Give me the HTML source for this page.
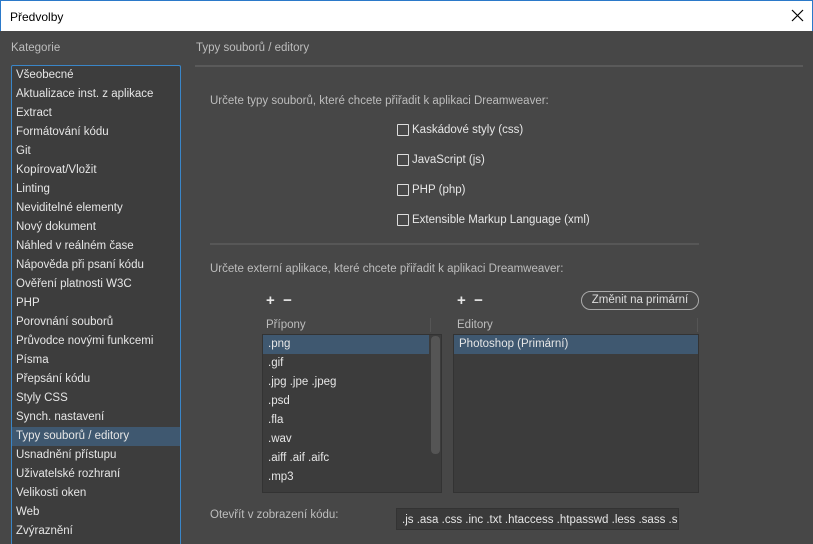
<!DOCTYPE html>
<html><head><meta charset="utf-8"><style>
*{margin:0;padding:0;box-sizing:border-box}
html,body{width:813px;height:544px;overflow:hidden}
body{background:#474747;font-family:"Liberation Sans",sans-serif;font-size:11.5px;color:#e6e6e6;position:relative}
.a{position:absolute;white-space:nowrap}
.title{left:0;top:0;width:813px;height:31px;background:#fff;color:#000;font-size:12px;border:1px solid #2b79c9;border-bottom:none}
.lab{color:#bdbdbd}
.cat{left:11px;top:65px;width:170px;height:479px;background:#3d3d3d;border:1px solid #3a86c8;border-bottom:none;border-radius:2px 2px 0 0;overflow:hidden}
.cat div{height:19px;line-height:19px;padding-left:4px}
.sel{background:#3f5870}
.cb{width:12px;height:12px;border:1px solid #ddd;border-radius:1px}
.list{background:#3c3c3c;border:1px solid #333}
.list div{height:19px;line-height:19px;padding-left:5px}
</style></head><body>
<div class="a title"><span class="a" style="left:9px;top:9px">Předvolby</span>
<svg class="a" style="left:790px;top:8px" width="13" height="13"><path d="M1 1L12 12M12 1L1 12" stroke="#000" stroke-width="1.2"/></svg></div>
<div class="a lab" style="left:11px;top:42px">Kategorie</div>
<div class="a lab" style="left:196px;top:42px">Typy souborů / editory</div>
<div class="a" style="left:195px;top:65px;width:608px;height:2px;background:#5a5a5a"></div>
<div class="a cat"><div style="margin-top:0px">Všeobecné</div><div>Aktualizace inst. z aplikace</div><div>Extract</div><div>Formátování kódu</div><div>Git</div><div>Kopírovat/Vložit</div><div>Linting</div><div>Neviditelné elementy</div><div>Nový dokument</div><div>Náhled v reálném čase</div><div>Nápověda při psaní kódu</div><div>Ověření platnosti W3C</div><div>PHP</div><div>Porovnání souborů</div><div>Průvodce novými funkcemi</div><div>Písma</div><div>Přepsání kódu</div><div>Styly CSS</div><div>Synch. nastavení</div><div class="sel">Typy souborů / editory</div><div>Usnadnění přístupu</div><div>Uživatelské rozhraní</div><div>Velikosti oken</div><div>Web</div><div>Zvýraznění</div></div>
<div class="a lab" style="left:210px;top:95px">Určete typy souborů, které chcete přiřadit k aplikaci Dreamweaver:</div>
<div class="a cb" style="left:397px;top:124px"></div><div class="a" style="left:412px;top:124px">Kaskádové styly (css)</div>
<div class="a cb" style="left:397px;top:154px"></div><div class="a" style="left:412px;top:154px">JavaScript (js)</div>
<div class="a cb" style="left:397px;top:184px"></div><div class="a" style="left:412px;top:184px">PHP (php)</div>
<div class="a cb" style="left:397px;top:214px"></div><div class="a" style="left:412px;top:214px">Extensible Markup Language (xml)</div>
<div class="a" style="left:210px;top:243px;width:489px;height:2px;background:#575757"></div>
<div class="a lab" style="left:210px;top:263px">Určete externí aplikace, které chcete přiřadit k aplikaci Dreamweaver:</div>
<div class="a" style="left:266px;top:292px;font-size:15px;font-weight:bold">+&nbsp;&nbsp;−</div>
<div class="a" style="left:457px;top:292px;font-size:15px;font-weight:bold">+&nbsp;&nbsp;−</div>
<div class="a" style="left:581px;top:291px;width:118px;height:19px;border:1px solid #aaa;border-radius:10px;text-align:center;line-height:17px;color:#ddd">Změnit na primární</div>
<div class="a lab" style="left:266px;top:319px">Přípony</div>
<div class="a" style="left:430px;top:318px;width:1px;height:14px;background:#555"></div>
<div class="a lab" style="left:457px;top:319px">Editory</div>
<div class="a" style="left:697px;top:318px;width:1px;height:14px;background:#555"></div>
<div class="a list" style="left:262px;top:334px;width:180px;height:159px"><div class="sel" style="margin-right:12px">.png</div><div>.gif</div><div>.jpg .jpe .jpeg</div><div>.psd</div><div>.fla</div><div>.wav</div><div>.aiff .aif .aifc</div><div>.mp3</div>
<div class="a" style="left:168px;top:1px;width:9px;height:118px;background:#555;border-radius:4px"></div></div>
<div class="a list" style="left:453px;top:334px;width:246px;height:159px"><div class="sel">Photoshop (Primární)</div></div>
<div class="a lab" style="left:210px;top:509px">Otevřít v zobrazení kódu:</div>
<div class="a" style="left:396px;top:508px;width:283px;height:22px;background:#3a3a3a;border:1px solid #333;overflow:hidden;padding:5px 0 0 5px">.js .asa .css .inc .txt .htaccess .htpasswd .less .sass .scss</div>
</body></html>
